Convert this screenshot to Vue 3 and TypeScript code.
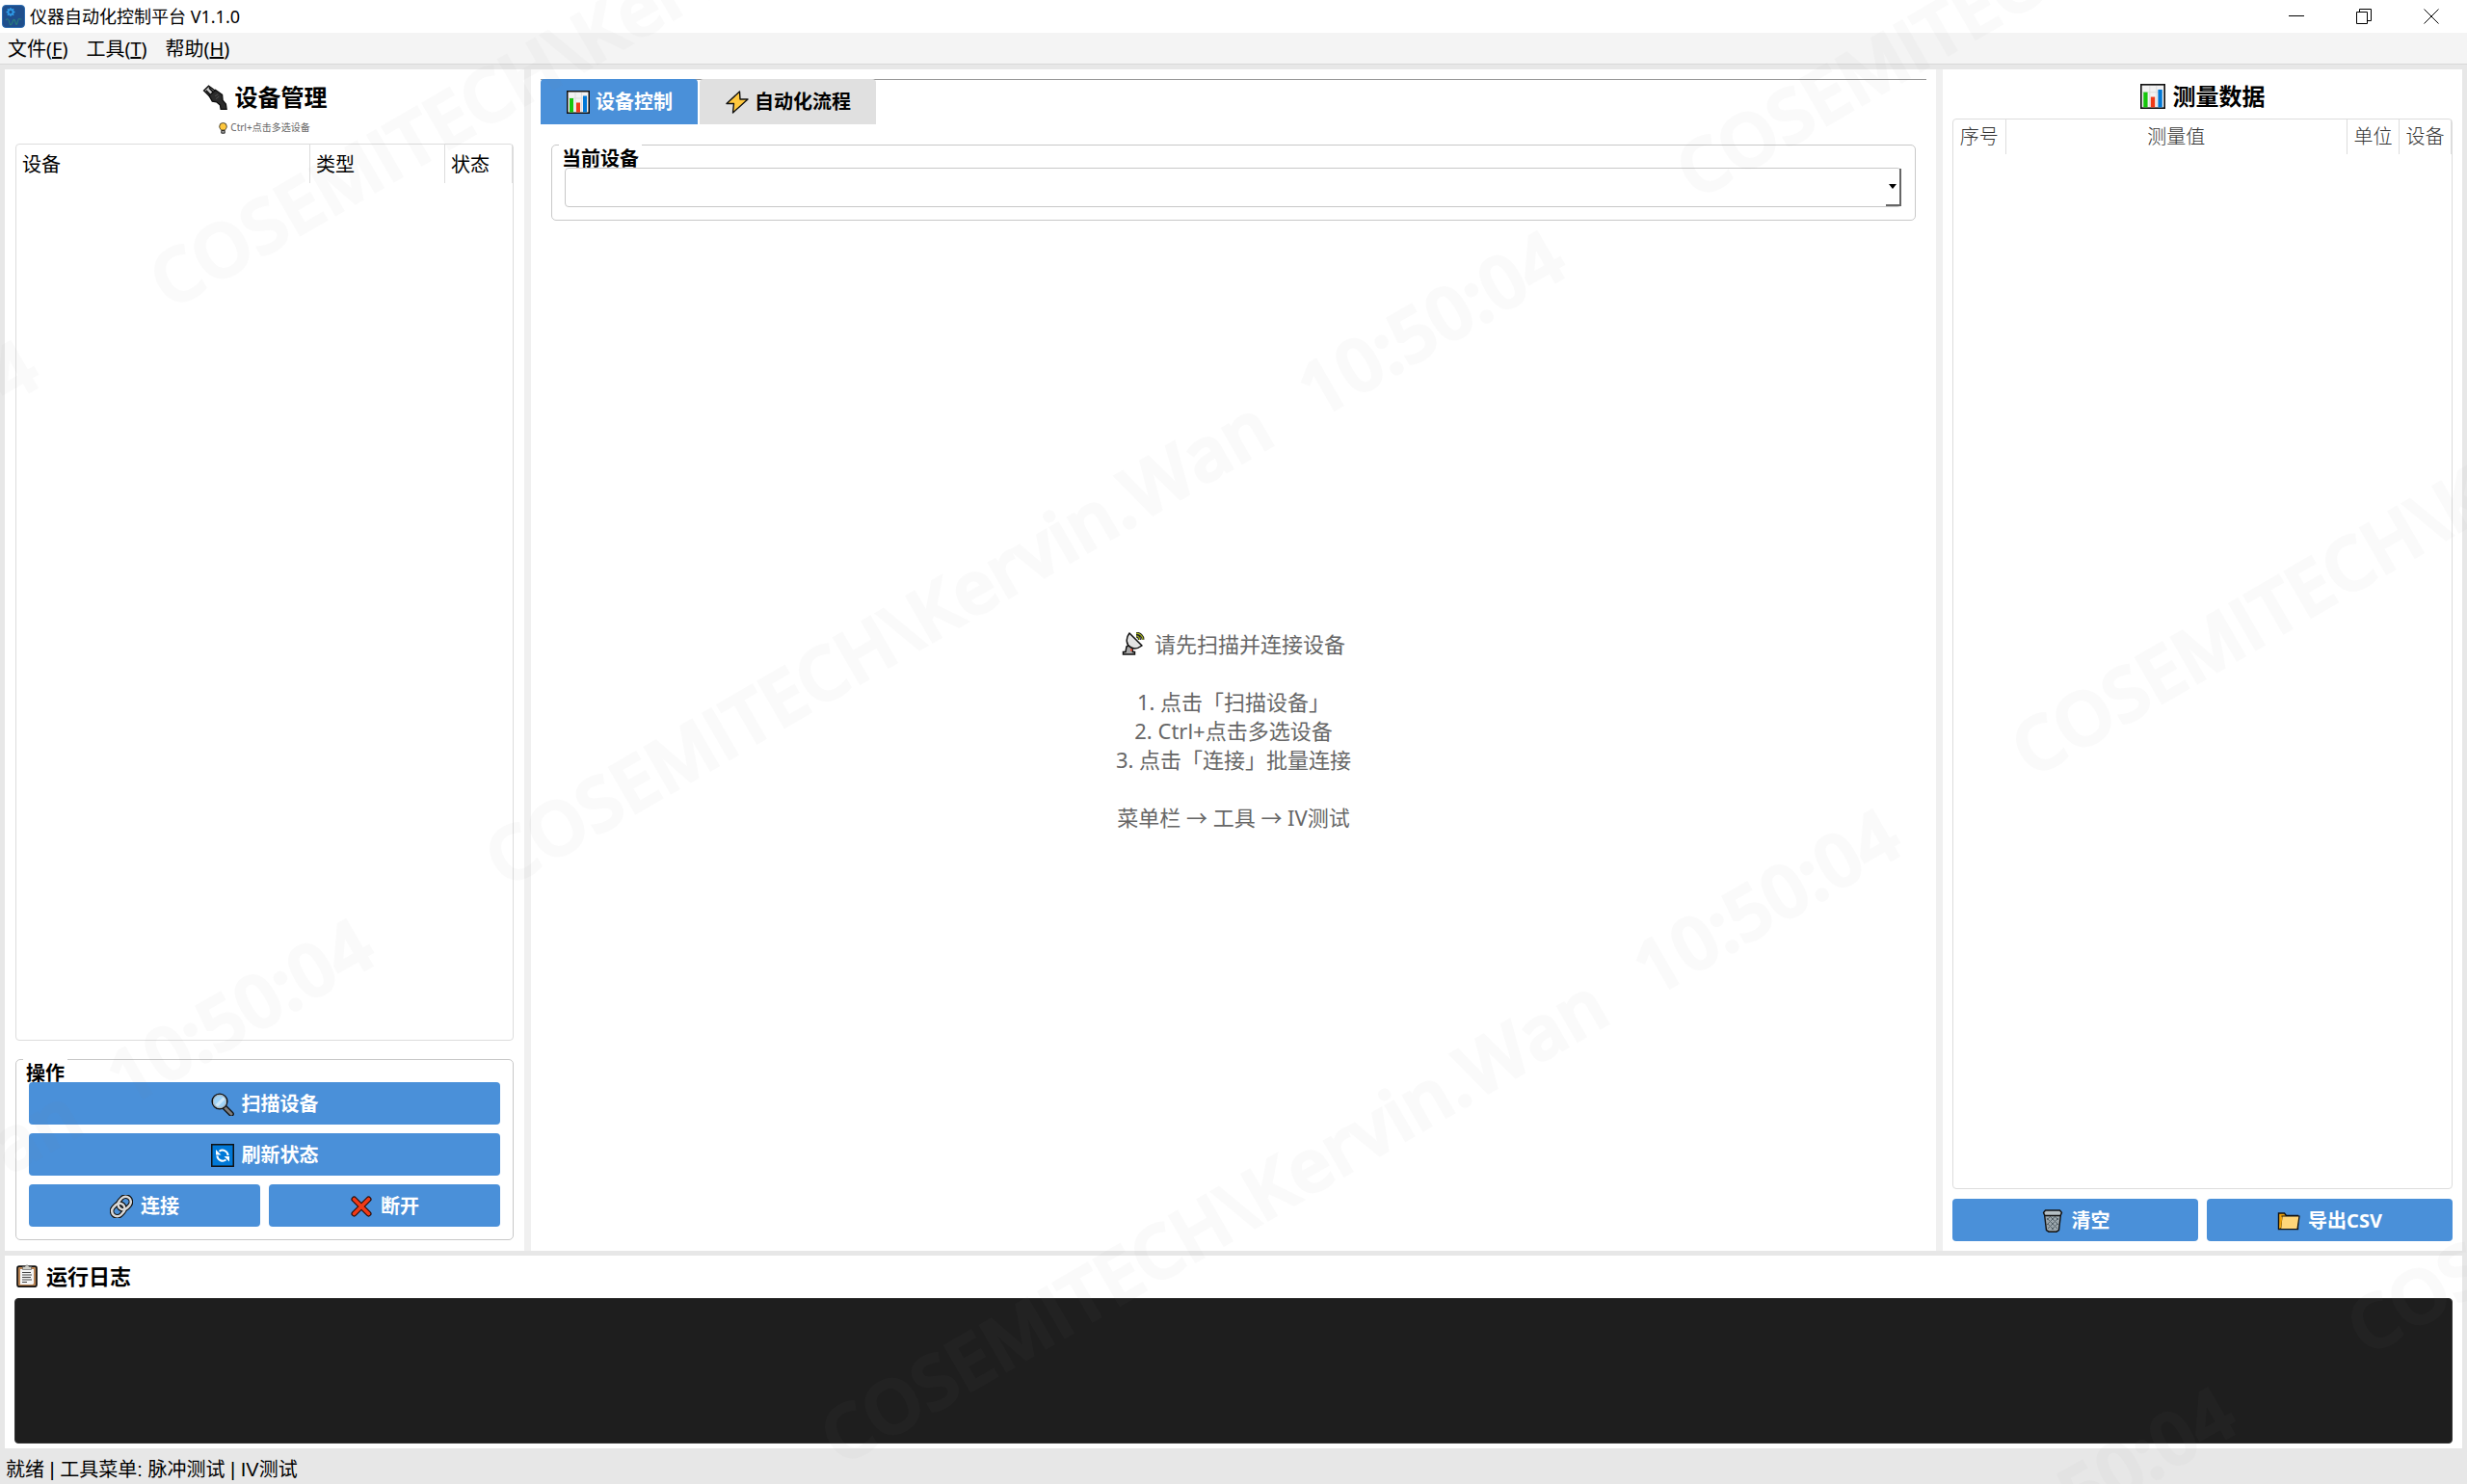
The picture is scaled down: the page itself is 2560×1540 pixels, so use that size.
<script setup lang="ts">
import { ref } from 'vue'

interface MenuEntry {
  label: string
  key: string
}

interface WatermarkTile {
  id: string
  x: number
  y: number
}

const menus: MenuEntry[] = [
  { label: '文件', key: 'F' },
  { label: '工具', key: 'T' },
  { label: '帮助', key: 'H' },
]

const currentDevice = ref('')
const activeTab = ref<'control' | 'flow'>('control')

// The watermark repeats on a grid that is turned 30 degrees against the window.
const tiles: WatermarkTile[] = []
for (let col = -2; col <= 2; col++) {
  for (let row = -2; row <= 4; row++) {
    const x = 524 + col * 1236 + row * 348
    const y = 922 - col * 714 + row * 600
    if (x > -1300 && x < 2560 && y > 0 && y < 2300) {
      tiles.push({ id: `${col}:${row}`, x, y })
    }
  }
}
</script>

<template>
  <div class="window">
    <header class="titlebar">
      <svg class="app-icon" viewBox="0 0 24 24" aria-hidden="true">
        <rect x="0.5" y="0.5" width="23" height="23" rx="3.500" fill="#1f4e8c" stroke="#2f6db0" />
        <circle cx="9" cy="7.500" r="2.600" fill="none" stroke="#2f9be8" stroke-width="1.800" />
        <path d="M9 3v1.500M9 10.500V12M4.500 7.500H6M12 7.500h1.500M5.800 4.300l1 1M11.200 9.700l1 1M12.200 4.300l-1 1M5.800 10.700l1-1" stroke="#2f9be8" stroke-width="1.400" />
        <path d="M4 16c2-3 3.500 0 4 3s2 2 3-1 2-4 3 0 1.500 3 2.500-1 1-2 4-2" fill="none" stroke="#2a7d7b" stroke-width="1.100" />
      </svg>
      <h1 class="app-title">仪器自动化控制平台 V1.1.0</h1>
      <div class="window-controls">
        <button type="button" aria-label="最小化">
          <svg viewBox="0 0 16 16"><path d="M0 7.500h16" /></svg>
        </button>
        <button type="button" aria-label="还原">
          <svg viewBox="0 0 16 16"><path d="M.5 3.500h11v12H.5zM3.500 3.500v-3h12v12h-4" /></svg>
        </button>
        <button type="button" aria-label="关闭">
          <svg viewBox="0 0 16 16"><path d="M.5.5l15 15M15.500.5l-15 15" /></svg>
        </button>
      </div>
    </header>

    <nav class="menubar">
      <button v-for="menu in menus" :key="menu.key" type="button">
        {{ menu.label }}(<u>{{ menu.key }}</u>)
      </button>
    </nav>

    <main class="workspace">
      <section class="panel devices">
        <h2 class="panel-title">
          <svg class="icon-lg" viewBox="0 0 24 24" aria-hidden="true">
            <path d="M1.500 5.500L6 1.200l7 5L7.500 11.500z" fill="#c9c9c9" stroke="#111" stroke-width="1.400" />
            <path d="M3.500 5.500l4 4M6.500 3l4 4" stroke="#111" stroke-width="1.600" />
            <path d="M6.500 10.500l6-5.500 6.500 4.500.5 5.500 3 3.500.7 5h-5.500l-.7-4-3.500-3-4-.7z" fill="#2b2b2b" stroke="#0d0d0d" stroke-width="1.200" />
            <path d="M12 11l3-2M13 13.500l3-2.500" stroke="#4b4b4b" />
          </svg>
          <span>设备管理</span>
        </h2>
        <p class="hint">
          <svg class="bulb" viewBox="0 0 9 12" aria-hidden="true">
            <path d="M2.800 8.200C1.500 6.800.7 5.600.7 4.200a3.800 3.700 0 0 1 7.600 0c0 1.400-.8 2.600-2.100 4z" fill="#ffc83d" stroke="#222" stroke-width="0.800" />
            <path d="M2.800 8.400h3.400v2.800H2.800z" fill="#aaa" stroke="#111" stroke-width="0.900" />
          </svg>
          <span>Ctrl+点击多选设备</span>
        </p>
        <div class="table-box">
          <table class="device-table">
            <thead>
              <tr>
                <th scope="col">设备</th>
                <th scope="col" class="col-type">类型</th>
                <th scope="col" class="col-state">状态</th>
              </tr>
            </thead>
          </table>
        </div>

        <section class="group actions" aria-labelledby="actions-title">
          <h3 id="actions-title" class="group-title">操作</h3>
          <div class="action-list">
            <button type="button" class="primary">
              <svg class="icon" viewBox="0 0 24 24" aria-hidden="true">
                <path d="M13.500 14.500L21 22" stroke="#111" stroke-width="5.600" stroke-linecap="round" />
                <path d="M14.500 15.500L21 22" stroke="#7d7d7d" stroke-width="3" stroke-linecap="round" />
                <circle cx="9" cy="9" r="7.800" fill="#9fd3f7" stroke="#111" stroke-width="1.500" />
                <circle cx="9" cy="9" r="6.600" fill="none" stroke="#a9b6bf" stroke-width="1.100" />
                <path d="M4.500 12.500l8-8a6 6 0 0 1 2 2.500l-7.500 7.500z" fill="#cfe9fb" />
              </svg>
              <span>扫描设备</span>
            </button>
            <button type="button" class="primary">
              <svg class="icon" viewBox="0 0 24 24" aria-hidden="true">
                <rect x="0.750" y="0.750" width="22.500" height="22.500" fill="#0078d7" stroke="#111" stroke-width="1.500" />
                <path d="M8.500 7.800c3.500-2.500 8.500-.8 9.200 4.200M15.500 16.500c-3.500 2.500-8.500.8-9.200-4.200" fill="none" stroke="#fff" stroke-width="2" />
                <path d="M5 6v5.500h5.500zM19 18.500V13h-5.500z" fill="#fff" />
              </svg>
              <span>刷新状态</span>
            </button>
            <div class="action-pair">
              <button type="button" class="primary">
                <svg class="icon" viewBox="0 0 24 24" fill="none" aria-hidden="true">
                  <g transform="rotate(-48 12 12)">
                    <rect x="0" y="6.500" width="14.500" height="11" rx="5.500" stroke="#111" stroke-width="4.800" />
                    <rect x="9.500" y="6.500" width="14.500" height="11" rx="5.500" stroke="#111" stroke-width="4.800" />
                    <rect x="0" y="6.500" width="14.500" height="11" rx="5.500" stroke="#d9d9d9" stroke-width="2.500" />
                    <rect x="9.500" y="6.500" width="14.500" height="11" rx="5.500" stroke="#d9d9d9" stroke-width="2.500" />
                  </g>
                </svg>
                <span>连接</span>
              </button>
              <button type="button" class="primary">
                <svg class="icon" viewBox="0 0 24 24" aria-hidden="true">
                  <path d="M4.500 4.500l15 15M19.500 4.500l-15 15" stroke="#2a0d08" stroke-width="6" stroke-linecap="round" />
                  <path d="M4.500 4.500l15 15M19.500 4.500l-15 15" stroke="#f03a17" stroke-width="3.800" stroke-linecap="round" />
                </svg>
                <span>断开</span>
              </button>
            </div>
          </div>
        </section>
      </section>

      <section class="panel control">
        <div class="tabs" role="tablist">
          <button type="button" role="tab" :class="{ active: activeTab === 'control' }" :aria-selected="activeTab === 'control'" @click="activeTab = 'control'">
            <svg class="icon" viewBox="0 0 24 24" aria-hidden="true">
              <rect x="0.750" y="0.750" width="22.500" height="22.500" fill="#f2f2f2" stroke="#111" stroke-width="1.500" />
              <path d="M2 8h20M9 2v20M15.500 2v20" stroke="#ddd" />
              <path d="M3 8h4v14.500H3z" fill="#16c60c" />
              <path d="M10 12.500h4v10h-4z" fill="#f03a17" />
              <path d="M17 5.500h4v17h-4z" fill="#0078d7" />
            </svg>
            <span>设备控制</span>
          </button>
          <button type="button" role="tab" :class="{ active: activeTab === 'flow' }" :aria-selected="activeTab === 'flow'" @click="activeTab = 'flow'">
            <svg class="icon" viewBox="0 0 24 24" aria-hidden="true">
              <path d="M14.500 1L1 13.500h7.500L7.500 23 23 9h-8z" fill="#ffc83d" stroke="#111" stroke-width="1.400" stroke-linejoin="round" />
            </svg>
            <span>自动化流程</span>
          </button>
        </div>
        <section class="group current">
          <label class="group-title" for="current-device">当前设备</label>
          <div class="combo">
            <select id="current-device" v-model="currentDevice">
              <option value=""></option>
            </select>
            <span class="combo-arrow" aria-hidden="true">
              <svg viewBox="0 0 8 5"><path d="M0 0h8L4 5z" /></svg>
            </span>
          </div>
        </section>
        <div class="placeholder">
          <p class="lead">
            <svg class="icon" viewBox="0 0 24 24" aria-hidden="true">
              <path d="M1.500 23h12v-2.500h-2L10 12l-5 3-1 5.500H1.500z" fill="#a8a8a8" stroke="#111" stroke-width="1.500" />
              <path d="M8 1C3.500 7 5 13 9 15.500s8 1.500 12-1.500z" fill="#e3e3e3" stroke="#111" stroke-width="1.500" stroke-linejoin="round" />
              <path d="M15 4c2 0 3.500 1.500 3.500 4M15 1.200c4 0 7 3 7 6.500" fill="none" stroke="#222" stroke-width="3" />
              <path d="M15 4c2 0 3.500 1.500 3.500 4M15 1.200c4 0 7 3 7 6.500" fill="none" stroke="#a7b71c" stroke-width="1.200" />
              <path d="M10 17.500v2" stroke="#e8442b" stroke-width="2" />
            </svg>
            <span>请先扫描并连接设备</span>
          </p>
          <ol class="steps">
            <li>1. 点击「扫描设备」</li>
            <li>2. Ctrl+点击多选设备</li>
            <li>3. 点击「连接」批量连接</li>
          </ol>
          <p>菜单栏 → 工具 → IV测试</p>
        </div>
      </section>

      <section class="panel data">
        <h2 class="panel-title">
          <svg class="icon-lg" viewBox="0 0 24 24" aria-hidden="true">
            <rect x="0.750" y="0.750" width="22.500" height="22.500" fill="#f2f2f2" stroke="#111" stroke-width="1.500" />
            <path d="M2 8h20M9 2v20M15.500 2v20" stroke="#ddd" />
            <path d="M3 8h4v14.500H3z" fill="#16c60c" />
            <path d="M10 12.500h4v10h-4z" fill="#f03a17" />
            <path d="M17 5.500h4v17h-4z" fill="#0078d7" />
          </svg>
          <span>测量数据</span>
        </h2>
        <div class="table-box">
          <table class="data-table">
            <thead>
              <tr>
                <th scope="col" class="col-narrow">序号</th>
                <th scope="col">测量值</th>
                <th scope="col" class="col-narrow">单位</th>
                <th scope="col" class="col-narrow">设备</th>
              </tr>
            </thead>
          </table>
        </div>
        <div class="data-actions">
          <button type="button" class="primary">
            <svg class="icon" viewBox="0 0 24 24" aria-hidden="true">
              <path d="M3.500 5h17l-2 16.500-2.500 1.700H8l-2.500-1.700z" fill="#9aa5ab" stroke="#111" stroke-width="1.400" />
              <path d="M6 9l11 11M9 7l9 9M14 7l4 4M18 9L7 20M15 7l-9 9M10 7l-4 4M13 21l-6-6M11 21l6-6" stroke="#56636b" />
              <path d="M4.500 1h15L21.500 3.500 20 6.500H4L2.500 3.500z" fill="#b4bec3" stroke="#111" stroke-width="1.400" stroke-linejoin="round" />
            </svg>
            <span>清空</span>
          </button>
          <button type="button" class="primary">
            <svg class="icon" viewBox="0 0 24 24" aria-hidden="true">
              <path d="M1.500 20.500V4h6l2 2.500h12V20.500z" fill="#f0a30a" stroke="#111" stroke-width="1.400" />
              <path d="M3.500 20.500L5 7h18l-2 13.500z" fill="#ffd679" stroke="#111" stroke-width="1.200" />
              <path d="M3.200 19.500L4.500 7.500" stroke="#f0a30a" stroke-width="1.800" />
            </svg>
            <span>导出CSV</span>
          </button>
        </div>
      </section>
    </main>

    <section class="panel log">
      <h2 class="log-title">
        <svg class="icon" viewBox="0 0 24 24" aria-hidden="true">
          <rect x="2" y="2.200" width="20" height="21" rx="2" fill="#b98352" stroke="#111" stroke-width="1.700" />
          <path d="M5 5h14v15l-1 1H5z" fill="#f5f5f5" />
          <path d="M7.500 5.500V2.500H10C10 .5 14 .5 14 2.500h2.500v3z" fill="#cfcfc8" stroke="#555" stroke-width="0.600" />
          <path d="M7 8.500h9M7 11h10M7 13.500h9M7 16h10M7 18.500h5" stroke="#444" />
        </svg>
        <span>运行日志</span>
      </h2>
      <div class="log-output" role="log" aria-label="运行日志"></div>
    </section>

    <footer class="statusbar">就绪 | 工具菜单: 脉冲测试 | IV测试</footer>

    <svg class="watermark" aria-hidden="true">
      <g v-for="tile in tiles" :key="tile.id" :transform="`translate(${tile.x} ${tile.y}) rotate(-30)`">
        <text x="0" y="0">COSEMITECH\Kervin.Wan</text>
        <text x="974" y="0">10:50:04</text>
      </g>
    </svg>
  </div>
</template>

<style>
body {
  margin: 0;
}
</style>

<style scoped>
.window {
  position: relative;
  display: flex;
  flex-direction: column;
  min-height: 100vh;
  overflow: hidden;
  box-sizing: border-box;
  background: #e7e7e7;
  color: #000;
  font-family: "Noto Sans", "Noto Sans CJK SC", sans-serif;
  font-size: 20px;
  line-height: 28px;
}

.window * {
  box-sizing: border-box;
}

h1,
h2,
h3,
p,
ol {
  margin: 0;
  padding: 0;
  font-weight: 400;
}

button {
  border: 0;
  padding: 0;
  color: inherit;
  background: none;
  font: inherit;
}

svg {
  flex: none;
}

.icon {
  width: 24px;
  height: 24px;
}

.icon-lg {
  width: 26px;
  height: 26px;
}

.titlebar {
  display: flex;
  align-items: center;
  height: 34px;
  padding: 0 2px;
  background: #fff;
}

.app-icon {
  width: 24px;
  height: 24px;
}

.app-title {
  flex: 1;
  margin-left: 5px;
  font-size: 18px;
}

.window-controls {
  display: flex;
}

.window-controls button {
  display: flex;
  align-items: center;
  justify-content: center;
  width: 70px;
  height: 34px;
}

.window-controls svg {
  width: 16px;
  height: 16px;
  fill: none;
  stroke: #000;
}

.menubar {
  display: flex;
  gap: 19px;
  height: 33px;
  padding: 2px 0 0 8px;
  border-bottom: 1px solid #d9d9d9;
  background: #f4f4f4;
}

.workspace {
  flex: 1;
  display: grid;
  grid-template-columns: minmax(0, 539fr) minmax(0, 1458fr) minmax(0, 539fr);
  gap: 7px;
  margin: 5px 5px 0;
  background: #f0f0f0;
}

.panel {
  display: flex;
  flex-direction: column;
  background: #fff;
}

.devices {
  padding: 11px;
}

.data {
  padding: 10px;
}

.panel-title {
  display: flex;
  align-items: center;
  justify-content: center;
  gap: 8px;
  height: 35px;
  font-size: 24px;
  font-weight: 700;
}

.hint {
  display: flex;
  align-items: center;
  justify-content: center;
  gap: 3px;
  margin: 7px 0 9px;
  color: #666;
  font-size: 10px;
  line-height: 15px;
}

.bulb {
  width: 9px;
  height: 12px;
}

.table-box {
  flex: 1;
  border: 1px solid #ddd;
  border-radius: 4px;
}

.data .table-box {
  margin-top: 6px;
}

table {
  width: 100%;
  table-layout: fixed;
  border-collapse: collapse;
}

th {
  height: 40px;
  padding: 2px 6px 0;
  border-right: 1px solid #ddd;
  font-weight: 400;
  text-align: left;
}

.col-type {
  width: 140px;
}

.col-state {
  width: 70px;
}

.data-table th {
  height: 36px;
  padding: 0;
  color: #333;
  font-family: "Liberation Serif", "Noto Sans CJK SC", serif;
  font-weight: 300;
  text-align: center;
}

.data-table .col-narrow {
  width: 54px;
}

.group {
  border: 1px solid #c8c8c8;
  border-radius: 5px;
}

.group-title {
  display: block;
  width: fit-content;
  height: 24px;
  margin: -1px 0 0 7px;
  padding: 1px 3px 0;
  background: #fff;
  font-size: 20px;
  font-weight: 700;
}

.actions {
  margin-top: 19px;
}

.action-list {
  display: flex;
  flex-direction: column;
  gap: 9px;
  padding: 0 13px 13px;
}

.action-pair,
.data-actions {
  display: flex;
  gap: 9px;
}

.data-actions {
  margin-top: 10px;
}

.primary {
  flex: 1;
  display: flex;
  align-items: center;
  justify-content: center;
  gap: 8px;
  min-height: 44px;
  padding-top: 2px;
  border-radius: 4px;
  background: #4a90d9;
  color: #fff;
  font-weight: 700;
}

.control {
  padding: 10px;
}

.tabs {
  display: flex;
  align-items: flex-start;
  gap: 2px;
  border-top: 1px solid #999;
}

.tabs button {
  display: flex;
  align-items: center;
  gap: 6px;
  height: 47px;
  margin-top: -1px;
  padding: 1px 26px 0 27px;
  border-radius: 4px 4px 0 0;
  background: #e0e0e0;
  font-weight: 700;
}

.tabs button.active {
  background: #4a90d9;
  color: #fff;
}

.current {
  margin: 21px 11px 0;
}

.combo {
  position: relative;
  margin: 0 14px 13px 13px;
}

.combo select {
  display: block;
  width: 100%;
  height: 41px;
  padding: 0 24px 0 8px;
  border: 1px solid #c8c8c8;
  border-radius: 4px;
  background: #fff;
  font: inherit;
  appearance: none;
}

.combo-arrow {
  position: absolute;
  top: 1px;
  right: 0;
  bottom: 1px;
  display: flex;
  align-items: center;
  justify-content: center;
  width: 16px;
  border-right: 2px solid #666;
  border-bottom: 2px solid #666;
  pointer-events: none;
}

.combo-arrow svg {
  width: 8px;
  height: 5px;
}

.placeholder {
  flex: 1;
  display: flex;
  flex-direction: column;
  align-items: center;
  justify-content: center;
  gap: 30px;
  padding-bottom: 2px;
  color: #666;
  font-size: 22px;
  line-height: 30px;
  text-align: center;
}

.lead {
  display: flex;
  align-items: center;
  gap: 10px;
}

.steps {
  list-style: none;
}

.log {
  margin: 5px 5px 0;
  padding: 6px 10px 5px;
}

.log-title {
  display: flex;
  align-items: center;
  gap: 8px;
  height: 30px;
  margin-bottom: 8px;
  padding-left: 1px;
  font-size: 22px;
  font-weight: 700;
}

.log-output {
  height: 151px;
  border: 1px solid #333;
  border-radius: 4px;
  background: #1e1e1e;
}

.statusbar {
  height: 37px;
  padding: 8px 6px 0;
  font-family: "Liberation Sans", "Noto Sans CJK SC", sans-serif;
}

.watermark {
  position: absolute;
  top: 0;
  left: 0;
  width: 100%;
  height: 100%;
  font-family: "Open Sans", sans-serif;
  font-size: 76px;
  font-weight: 600;
  pointer-events: none;
}

.watermark text {
  fill: #8c8c8c;
  stroke: #8c8c8c;
  stroke-width: 3px;
  opacity: 0.04;
}
</style>
